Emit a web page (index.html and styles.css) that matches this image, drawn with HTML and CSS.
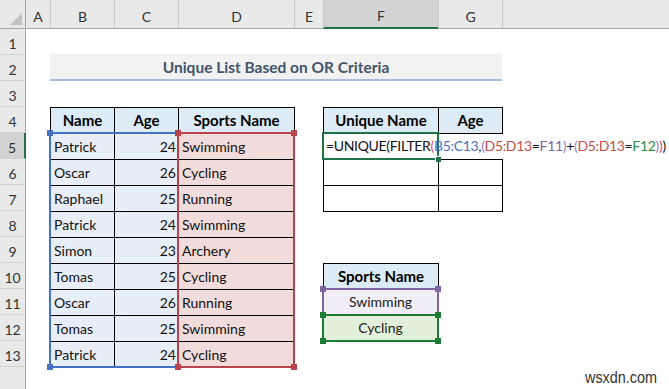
FILE: index.html
```html
<!DOCTYPE html>
<html>

<head>
  <meta charset="utf-8">
  <title>Unique List Based on OR Criteria</title>
  <link rel="stylesheet" href="styles.css">
</head>

<body>
  <div class="sheet">
    <div class="corner"></div>
    <div class="col-heads">
      <div class="col-head col-a">A</div>
      <div class="col-head col-b">B</div>
      <div class="col-head col-c">C</div>
      <div class="col-head col-d">D</div>
      <div class="col-head col-e">E</div>
      <div class="col-head col-f active">F</div>
      <div class="col-head col-g">G</div>
      <div class="col-head col-rest"></div>
    </div>
    <div class="row-heads">
      <div class="row-head">1</div>
      <div class="row-head">2</div>
      <div class="row-head">3</div>
      <div class="row-head">4</div>
      <div class="row-head active">5</div>
      <div class="row-head">6</div>
      <div class="row-head">7</div>
      <div class="row-head">8</div>
      <div class="row-head">9</div>
      <div class="row-head">10</div>
      <div class="row-head">11</div>
      <div class="row-head">12</div>
      <div class="row-head">13</div>
      <div class="row-head last"></div>
    </div>

    <div class="cells">
      <div class="title">Unique List Based on OR Criteria</div>

      <div class="tbl data-tbl">
        <div class="th">Name</div>
        <div class="th">Age</div>
        <div class="th">Sports Name</div>

        <div class="td name">Patrick</div>
        <div class="td num">24</div>
        <div class="td sport">Swimming</div>
        <div class="td name">Oscar</div>
        <div class="td num">26</div>
        <div class="td sport">Cycling</div>
        <div class="td name">Raphael</div>
        <div class="td num">25</div>
        <div class="td sport">Running</div>
        <div class="td name">Patrick</div>
        <div class="td num">24</div>
        <div class="td sport">Swimming</div>
        <div class="td name">Simon</div>
        <div class="td num">23</div>
        <div class="td sport">Archery</div>
        <div class="td name">Tomas</div>
        <div class="td num">25</div>
        <div class="td sport">Cycling</div>
        <div class="td name">Oscar</div>
        <div class="td num">26</div>
        <div class="td sport">Running</div>
        <div class="td name">Tomas</div>
        <div class="td num">25</div>
        <div class="td sport">Swimming</div>
        <div class="td name">Patrick</div>
        <div class="td num">24</div>
        <div class="td sport">Cycling</div>
      </div>

      <!-- formula reference outlines -->
      <div class="ref ref-blue"><i class="dot tl"></i><i class="dot tr"></i><i class="dot bl"></i><i class="dot br"></i></div>
      <div class="ref ref-red"><i class="dot tl"></i><i class="dot tr"></i><i class="dot bl"></i><i class="dot br"></i></div>

      <div class="tbl uniq-head">
        <div class="th">Unique Name</div>
        <div class="th">Age</div>
      </div>

      <div class="tbl uniq-body">
        <div class="td"></div>
        <div class="td"></div>
        <div class="td"></div>
        <div class="td"></div>
      </div>

      <div class="selected">=UNIQUE(FILTER<span class="p2">(</span><span class="r-blue">B5:C13</span>,<span class="p3">(</span><span class="r-red">D5:D13</span>=<span class="r-purple">F11</span><span class="p3">)</span>+<span class="p3">(</span><span class="r-red">D5:D13</span>=<span class="r-green">F12</span><span class="p3">)</span><span class="p2">)</span>)</div>

      <div class="crit-head">Sports Name</div>
      <div class="ref crit crit-purple">Swimming<i class="dot tl"></i><i class="dot tr"></i><i class="dot bl"></i><i class="dot br"></i></div>
      <div class="ref crit crit-green">Cycling<i class="dot tl"></i><i class="dot tr"></i><i class="dot bl"></i><i class="dot br"></i></div>
    </div>

    <div class="watermark">wsxdn.com</div>
  </div>
</body>

</html>
```

FILE: styles.css
```css
body {
  margin: 0;
  background: #fff;
  font-family: Lato, 'Open Sans', sans-serif;
  color: #111;
}

.sheet {
  position: relative;
  width: 669px;
  height: 389px;
  overflow: hidden;
  display: grid;
  grid-template-columns: 26px 1fr;
  grid-template-rows: 29px 1fr;
}

/* headers */
.corner {
  position: relative;
  background: #e9e9e9;
  border-right: 1px solid #a6a6a6;
  border-bottom: 1px solid #a6a6a6;
}

.corner::after {
  content: '';
  position: absolute;
  right: 3px;
  bottom: 3px;
  border-left: 12px solid transparent;
  border-bottom: 12px solid #c2c2c2;
}

.col-heads {
  display: flex;
  background: #e9e9e9;
  border-bottom: 1px solid #a6a6a6;
}

.col-head {
  display: flex;
  align-items: flex-end;
  justify-content: center;
  box-sizing: border-box;
  padding-bottom: 1px;
  line-height: 20px;
  font-size: 14px;
  color: #333;
}

.col-head + .col-head {
  border-left: 1px solid #c8c8c8;
}

.col-a { width: 24px; }
.col-b { width: 64px; }
.col-c { width: 64px; }
.col-d { width: 116px; }
.col-e { width: 29px; }
.col-f { width: 115px; }
.col-g { width: 64px; }
.col-rest { flex: 1; }

.col-head.active {
  background: #d3d3d3;
  border-bottom: 2px solid #217346;
  margin-bottom: -1px;
}

.row-heads {
  display: flex;
  flex-direction: column;
  background: #e9e9e9;
}

.row-head {
  display: flex;
  align-items: flex-end;
  justify-content: center;
  box-sizing: border-box;
  height: 26px;
  flex: none;
  border-right: 1px solid #a6a6a6;
  border-bottom: 1px solid #d0d0d0;
  line-height: 20px;
  font-size: 14px;
  color: #333;
}

.row-head.active {
  background: #d3d3d3;
  border-right: 2px solid #217346;
}

.row-head.last {
  flex: 1;
  border-bottom: none;
}

/* cell area */
.cells {
  display: grid;
  grid-template-columns: 24px 64px 64px 116px 29px 115px 64px 1fr;
  grid-template-rows: repeat(13, 26px) 1fr;
  font-size: 14px;
}

.title {
  grid-column: 2 / 8;
  grid-row: 2;
  background: #f2f2f2;
  border-bottom: 2px solid #a9bce2;
  color: #44546a;
  font-weight: 700;
  font-size: 15.5px;
  text-align: center;
  line-height: 24px;
  padding-top: 1px;
  margin-top: -1px;
}

.tbl {
  display: grid;
  gap: 1px;
  padding: 1px;
  background: #000;
  margin: 0 -1px -1px 0;
}

.tbl > div {
  background: #fff;
  line-height: 25px;
  padding: 0 3px;
  white-space: nowrap;
  overflow: hidden;
}

.tbl .th {
  background: #ddebf7;
  font-weight: 700;
  font-size: 15px;
  text-align: center;
  color: #000;
}

.data-tbl {
  grid-column: 2 / 5;
  grid-row: 4 / 14;
  grid-template-columns: 63px 63px 115px;
  grid-template-rows: repeat(10, 25px);
}

.tbl .name,
.tbl .num {
  background: #e8eef8;
}

.tbl .num {
  text-align: right;
  padding-right: 2px;
}

.tbl .sport {
  background: #f2dcdb;
}

.uniq-head {
  grid-column: 6 / 8;
  grid-row: 4;
  grid-template-columns: 114px 63px;
  grid-template-rows: 25px;
}

.uniq-body {
  grid-column: 6 / 8;
  grid-row: 6 / 8;
  grid-template-columns: 114px 63px;
  grid-template-rows: 25px 25px;
}

/* reference outlines drawn over the ranges */
.ref {
  position: relative;
  margin: -1px;
  border: 2px solid;
}

.ref-blue {
  grid-column: 2 / 4;
  grid-row: 5 / 14;
  border-color: #4472c4;
  color: #4472c4;
}

.ref-red {
  grid-column: 4;
  grid-row: 5 / 14;
  border-color: #b8434d;
  color: #b8434d;
}

.dot {
  position: absolute;
  width: 6px;
  height: 6px;
  background: currentColor;
}

.dot.tl { top: -4px; left: -4px; }
.dot.tr { top: -4px; right: -4px; }
.dot.bl { bottom: -4px; left: -4px; }
.dot.br { bottom: -4px; right: -4px; }

.selected {
  grid-column: 6;
  grid-row: 5;
  position: relative;
  z-index: 1;
  margin: -1px;
  border: 2px solid #217346;
  padding-left: 2px;
  line-height: 24px;
  letter-spacing: -0.33px;
  white-space: nowrap;
  color: #111;
}

.selected::after {
  content: '';
  position: absolute;
  right: -4px;
  bottom: -4px;
  width: 5px;
  height: 5px;
  background: #217346;
  border-left: 1px solid #fff;
  border-top: 1px solid #fff;
}

.p2 { color: #d04f6f; }
.p3 { color: #9a7fc8; }
.r-blue { color: #4472c4; }
.r-red { color: #c0504d; }
.r-purple { color: #8064a2; }
.r-green { color: #2f8a3c; }

.crit-head {
  grid-column: 6;
  grid-row: 10;
  background: #ddebf7;
  border: 1px solid #000;
  border-bottom: none;
  margin-right: -1px;
  font-weight: 700;
  font-size: 15px;
  text-align: center;
  line-height: 25px;
  color: #000;
}

.crit {
  text-align: center;
  line-height: 24px;
}

.crit-purple {
  grid-column: 6;
  grid-row: 11;
  background: #f0edf7;
  border-color: #8064a2;
  color: #8064a2;
}

.crit-green {
  grid-column: 6;
  grid-row: 12;
  background: #e2efda;
  border-color: #1e7b34;
  color: #1e7b34;
}

.crit-purple::first-line,
.crit-green::first-line {
  color: #222;
}

.watermark {
  position: absolute;
  right: 12px;
  bottom: 2px;
  font-family: 'Liberation Sans', Arial, sans-serif;
  font-size: 16px;
  color: #333;
  transform: scaleX(0.9);
  transform-origin: right bottom;
}
```
